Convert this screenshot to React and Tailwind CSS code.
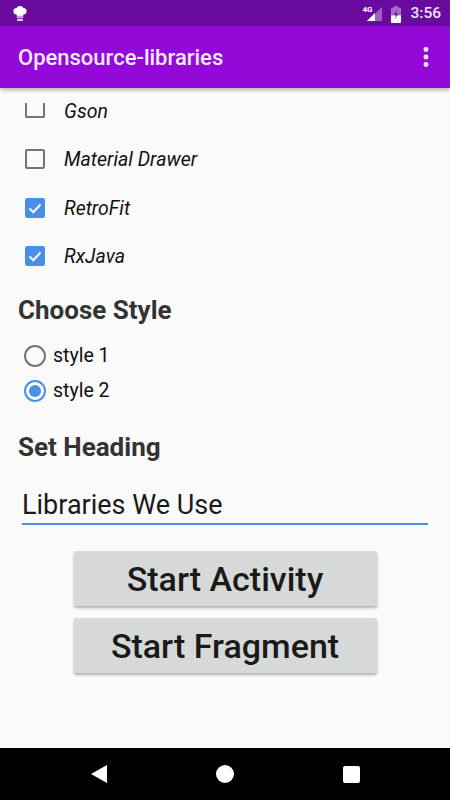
import React from 'react';
import { MoreVertical } from 'lucide-react';

const ROBOTO = "font-['Roboto',sans-serif]";

const Chef = () => (
  <svg className="w-[14px] h-[16px]" viewBox="0 0 15 17" fill="#fff">
    <circle cx="4" cy="5.500" r="3.500" />
    <circle cx="7.500" cy="4" r="4" />
    <circle cx="11" cy="5.500" r="3.500" />
    <rect x="4" y="5" width="7" height="5.500" />
    <path d="M4 11h7v1.500H4zM4.500 13.500h6V16h-6z" opacity="0.8" />
  </svg>
);

const Signal = () => (
  <div className="relative w-[21px] h-[16px]">
    <svg className="absolute inset-0" width="21" height="16" viewBox="0 0 21 16">
      <path d="M20 1v14H5z" fill="#fff" fillOpacity="0.35" />
      <path d="M13 7v8H5z" fill="#fff" />
    </svg>
    <span className="absolute left-0 top-[-1px] text-[8px] leading-[10px] font-bold text-white">4G</span>
  </div>
);

const Battery = () => (
  <svg width="10" height="17" viewBox="0 0 11 16" preserveAspectRatio="none">
    <path d="M3.5 0h4v1.5H10a1 1 0 0 1 1 1V15a1 1 0 0 1-1 1H1a1 1 0 0 1-1-1V2.500a1 1 0 0 1 1-1h2.500z" fill="#fff" fillOpacity="0.4" />
    <path d="M0 9h11v6a1 1 0 0 1-1 1H1a1 1 0 0 1-1-1z" fill="#fff" />
    <path d="M6.500 3 3.500 8.500h2L4.500 13l3-6h-2z" fill="#5b0a90" />
  </svg>
);

const Checkbox = ({ checked, clipped }) => {
  if (clipped) {
    return <div className="w-[20px] h-[15px] border-2 border-t-0 border-[#757575] rounded-b-[2px] mt-[-1px]" />;
  }
  if (checked) {
    return (
      <div className="w-[20px] h-[20px] rounded-[2px] bg-[#4a8fe7] flex items-center justify-center">
        <svg width="14" height="14" viewBox="0 0 14 14" fill="none" stroke="#fff" strokeWidth="2">
          <path d="M1.500 7.500l3.800 3.700 7.200-7.700" />
        </svg>
      </div>
    );
  }
  return <div className="w-[20px] h-[20px] rounded-[2px] border-2 border-[#757575]" />;
};

const CheckRow = ({ label, checked, clipped }) => (
  <div className="h-[48.33px] flex items-center pl-[25px] gap-[19px]">
    <div className="w-[20px] flex justify-center mb-[2px]">
      <Checkbox checked={checked} clipped={clipped} />
    </div>
    <span className="text-[19.5px] leading-[26px] italic text-[#111]">{label}</span>
  </div>
);

const Radio = ({ label, selected }) => (
  <div className="h-[35px] flex items-center pl-[24px] gap-[7px]">
    <div className={`w-[22px] h-[22px] rounded-full border-2 flex items-center justify-center ${selected ? 'border-[#4a8fe7]' : 'border-[#757575]'}`}>
      {selected && <div className="w-[12px] h-[12px] rounded-full bg-[#4a8fe7]" />}
    </div>
    <span className="text-[19.5px] text-[#111]">{label}</span>
  </div>
);

const ActionButton = ({ children }) => (
  <button className="w-[303px] h-[55px] pt-[2px] bg-[#d7d8d8] rounded-[2px] text-[34px] font-medium text-[#1a1a1a] shadow-[0_2px_3px_rgba(0,0,0,0.3)]">
    {children}
  </button>
);

export default function App() {
  return (
    <div className={`w-[450px] h-[800px] flex flex-col bg-[#fafafa] overflow-hidden ${ROBOTO}`}>
      {/* status bar */}
      <div className="h-[26px] bg-[#6a0b9f] flex items-center justify-between pt-[2px] pl-[13px] pr-[9px]">
        <Chef />
        <div className="flex items-center">
          <Signal />
          <div className="ml-[8px]"><Battery /></div>
          <span className="ml-[9px] text-[15.5px] font-medium text-[#f0e4f7]">3:56</span>
        </div>
      </div>

      {/* app bar */}
      <div className="h-[62px] bg-[#9209d8] flex items-center justify-between pl-[18px] pr-[11px] shadow-[0_2px_4px_rgba(0,0,0,0.3)] z-10">
        <span className="text-[22px] font-medium text-[#f6e8fc]">Opensource-libraries</span>
        <MoreVertical className="w-[26px] h-[26px] text-[#f6e8fc]" strokeWidth={2.6} />
      </div>

      {/* form */}
      <div className="flex-1 flex flex-col">
        <CheckRow label="Gson" clipped />
        <CheckRow label="Material Drawer" />
        <CheckRow label="RetroFit" checked />
        <CheckRow label="RxJava" checked />

        <h2 className="mt-[12px] pl-[18px] text-[26px] leading-[34px] font-bold text-[#333]">Choose Style</h2>
        <div className="mt-[11px]">
          <Radio label="style 1" />
          <Radio label="style 2" selected />
        </div>

        <h2 className="mt-[22px] pl-[18px] text-[26px] leading-[34px] font-bold text-[#333]">Set Heading</h2>
        <div className="mt-[23px] mx-[22px] h-[38px] pt-[1px] border-b-2 border-[#4a8fe7] text-[27px] leading-[34px] text-[#1a1a1a]">
          Libraries We Use
        </div>

        <div className="mt-[26px] flex flex-col items-center gap-[12px]">
          <ActionButton>Start Activity</ActionButton>
          <ActionButton>Start Fragment</ActionButton>
        </div>
      </div>

      {/* nav bar */}
      <div className="h-[52px] bg-black flex items-center justify-between pl-[91px] pr-[90px]">
        <svg width="16" height="18" viewBox="0 0 16 18" fill="#fff"><path d="M16 0v18L0 9z" /></svg>
        <div className="w-[18px] h-[18px] rounded-full bg-white" />
        <div className="w-[17px] h-[17px] rounded-[2px] bg-white" />
      </div>
    </div>
  );
}
